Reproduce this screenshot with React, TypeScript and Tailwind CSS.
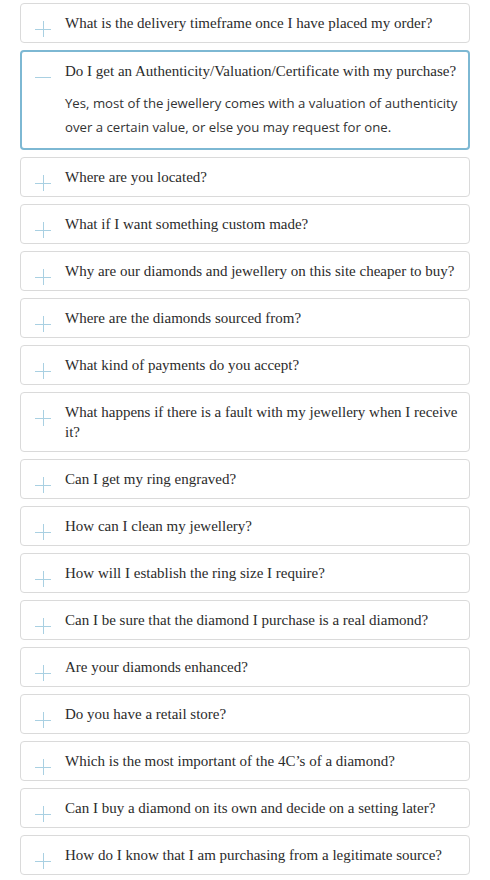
import { useState } from "react";

const faqs: { q: string; a?: string }[] = [
	{ q: "What is the delivery timeframe once I have placed my order?" },
	{
		q: "Do I get an Authenticity/Valuation/Certificate with my purchase?",
		a: "Yes, most of the jewellery comes with a valuation of authenticity over a certain value, or else you may request for one.",
	},
	{ q: "Where are you located?" },
	{ q: "What if I want something custom made?" },
	{ q: "Why are our diamonds and jewellery on this site cheaper to buy?" },
	{ q: "Where are the diamonds sourced from?" },
	{ q: "What kind of payments do you accept?" },
	{ q: "What happens if there is a fault with my jewellery when I receive it?" },
	{ q: "Can I get my ring engraved?" },
	{ q: "How can I clean my jewellery?" },
	{ q: "How will I establish the ring size I require?" },
	{ q: "Can I be sure that the diamond I purchase is a real diamond?" },
	{ q: "Are your diamonds enhanced?" },
	{ q: "Do you have a retail store?" },
	{ q: "Which is the most important of the 4C’s of a diamond?" },
	{ q: "Can I buy a diamond on its own and decide on a setting later?" },
	{ q: "How do I know that I am purchasing from a legitimate source?" },
];

function ToggleIcon({ open }: { open: boolean }) {
	// sits a little low next to the text, like the original site
	return (
		<svg width="16" height="16" viewBox="0 0 16 16" className="shrink-0 mt-[8px] -mb-[4px]" fill="none" stroke="#a9d0e2" strokeWidth="1">
			<path d="M0 8.5h16" />
			{!open && <path d="M8.5 0v16" />}
		</svg>
	);
}

export default function App() {
	const [openIdx, setOpenIdx] = useState(1);

	return (
		<div className="w-[490px] min-h-screen bg-white px-[20px] pt-[3px] pb-[4px] flex flex-col gap-[7px]">
			{faqs.map((f, i) => {
				const open = openIdx === i;
				return (
					<div
						key={i}
						className={
							open
								? "rounded-[4px] border-2 border-[#7db8d3] bg-white pl-[13px] pr-[1px] pt-[9px] pb-[9px]"
								: "rounded-[4px] border border-[#dadada] bg-white pl-[14px] pr-[2px] py-[9px]"
						}
					>
						<button
							className="flex w-full items-start gap-[14px] text-left cursor-pointer"
							onClick={() => setOpenIdx(open ? -1 : i)}
						>
							<ToggleIcon open={open} />
							<span className="text-[15px] leading-[20px] text-[#2b2b2b] font-['Liberation_Serif',serif]">
								{f.q}
							</span>
						</button>
						{open && f.a && (
							<p className="mt-[10px] pl-[30px] text-[13.2px] leading-[24px] text-[#333] font-['Open_Sans',sans-serif]">
								{f.a}
							</p>
						)}
					</div>
				);
			})}
		</div>
	);
}
